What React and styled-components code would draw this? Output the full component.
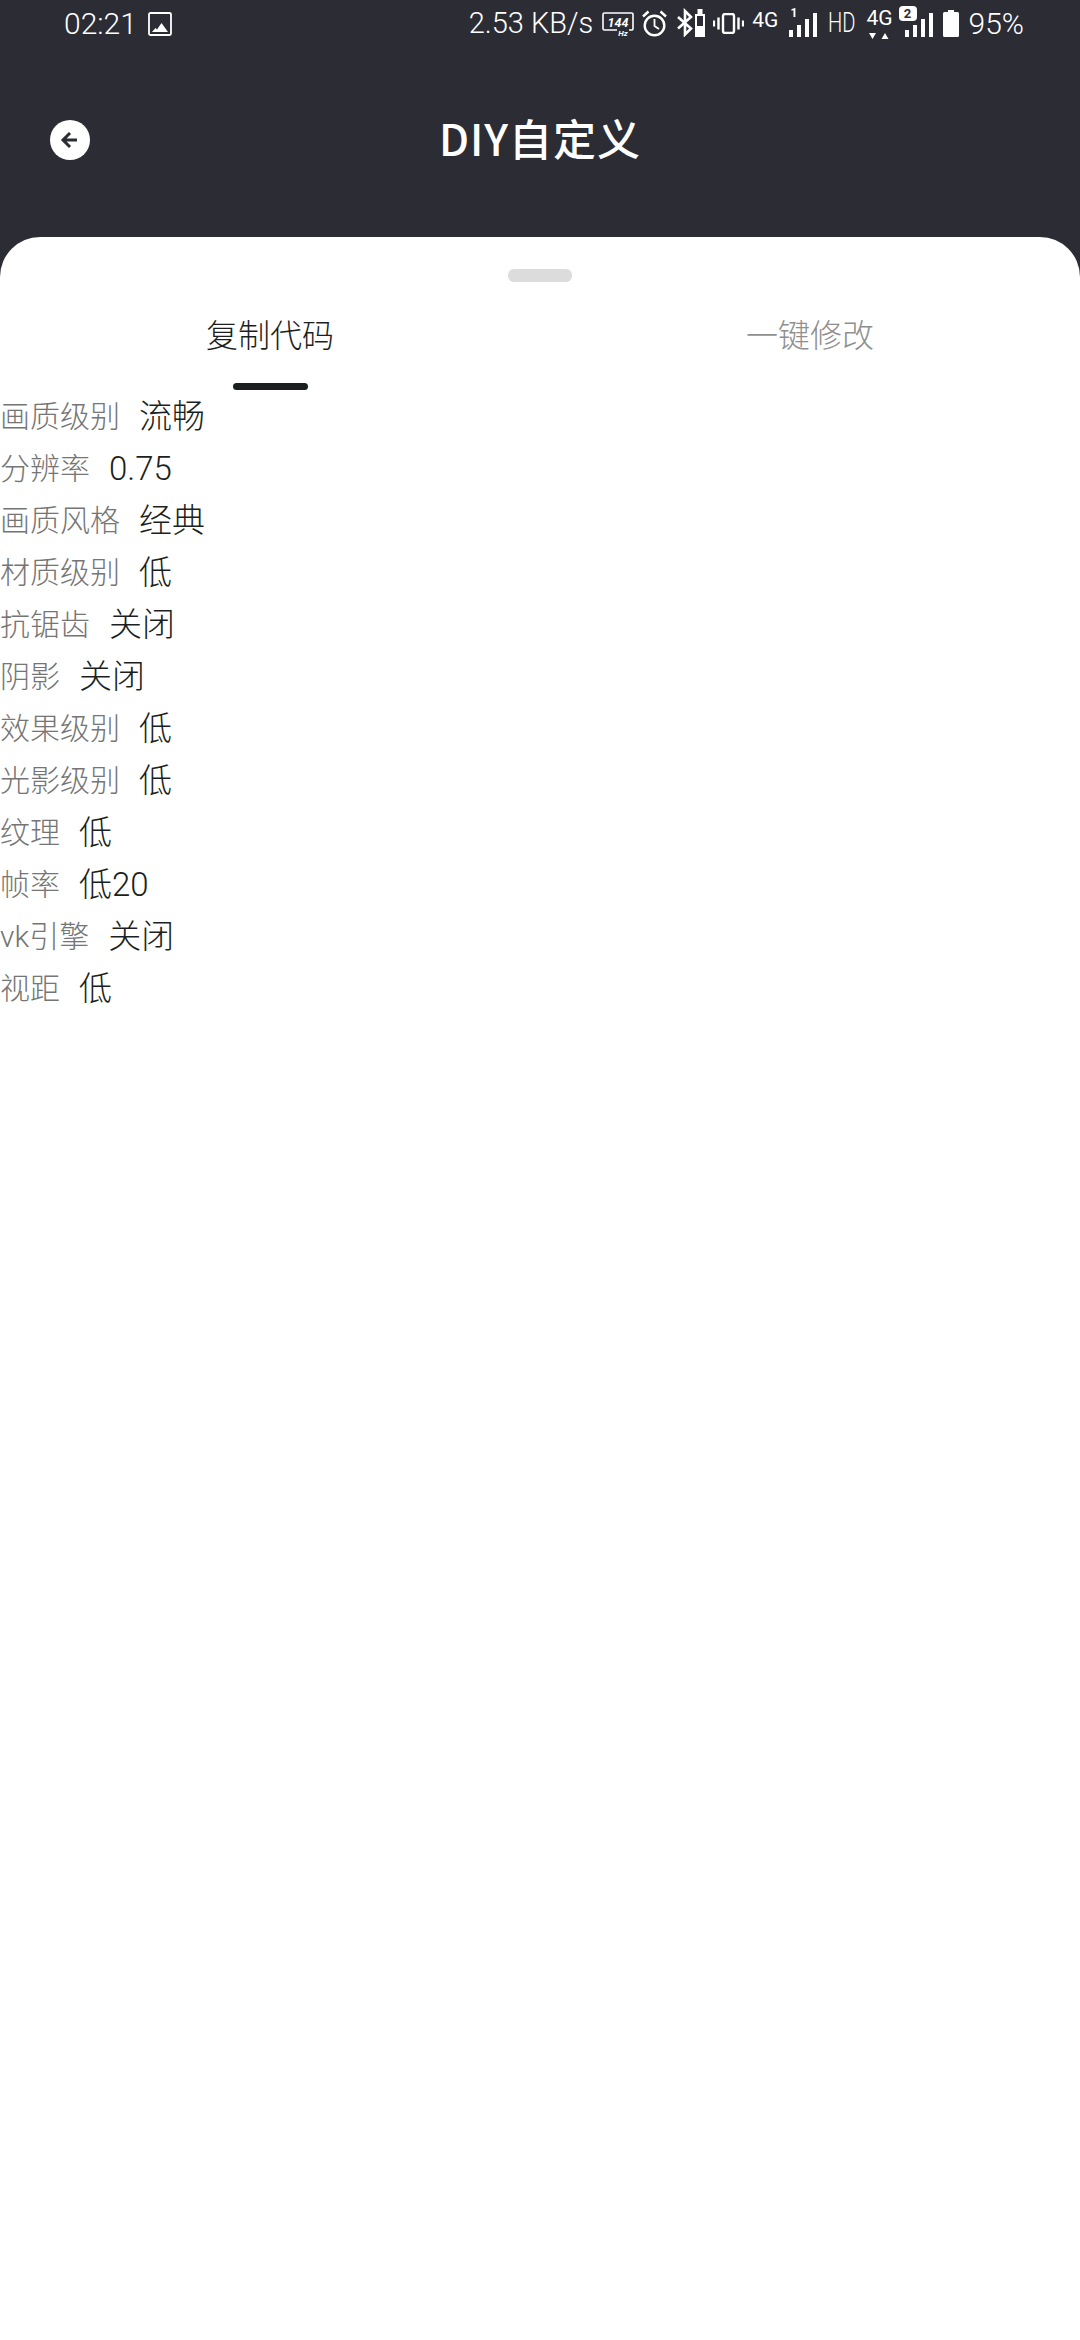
import React from 'react';
import styled, { createGlobalStyle } from 'styled-components';

const GlobalStyle = createGlobalStyle`
  html, body {
    margin: 0;
    padding: 0;
    background: #ffffff;
  }
  * {
    box-sizing: border-box;
  }
`;

const Page = styled.div`
  width: 1080px;
  height: 2340px;
  overflow: hidden;
  display: flex;
  flex-direction: column;
  background: #2c2c35;
  font-family: Roboto, 'Noto Sans CJK SC', sans-serif;
  font-weight: 300;
`;

const StatusBar = styled.div`
  height: 46px;
  padding: 0 56px 0 64px;
  display: flex;
  align-items: center;
  justify-content: space-between;
  color: #ffffff;
  font-size: 30px;
`;

const StatusGroup = styled.div`
  display: flex;
  align-items: center;
`;

const Speed = styled.span`
  font-size: 29px;
`;

const Header = styled.div`
  height: 191px;
  padding: 0 50px 3px;
  display: grid;
  grid-template-columns: 40px 1fr 40px;
  align-items: center;
`;

const BackButton = styled.div`
  width: 40px;
  height: 40px;
  border-radius: 50%;
  background: #ffffff;
  display: flex;
  align-items: center;
  justify-content: center;
`;

const Title = styled.div`
  margin-bottom: 6px;
  text-align: center;
  color: #ffffff;
  font-family: 'Noto Sans CJK SC', sans-serif;
  font-size: 43px;
  font-weight: 500;
  letter-spacing: 1px;
  line-height: 50px;
`;

const Sheet = styled.div`
  flex: 1;
  background: #ffffff;
  border-radius: 40px 40px 0 0;
  display: flex;
  flex-direction: column;
`;

const Handle = styled.div`
  width: 64px;
  height: 13px;
  margin: 32px auto 0;
  border-radius: 6px;
  background: #dcdcdc;
`;

const Tabs = styled.div`
  display: flex;
  height: 101px;
  margin-top: 8px;
`;

const Tab = styled.div`
  flex: 1;
  padding-top: 23px;
  text-align: center;
  font-size: 32px;
  line-height: 46px;
  color: ${(p) => (p.$active ? '#1c1f20' : '#8f8f8f')};
`;

const TabMark = styled.div`
  width: 75px;
  height: 7px;
  margin: 24px auto 0;
  border-radius: 4px;
  background: #1c1f20;
`;

const List = styled.div`
  display: flex;
  flex-direction: column;
`;

const Row = styled.div`
  height: 52px;
  display: flex;
  align-items: center;
  gap: 19px;
`;

const Label = styled.span`
  font-size: 30px;
  line-height: 52px;
  color: #757575;
`;

const Value = styled.span`
  font-size: 33px;
  line-height: 52px;
  color: #1c1f20;
`;

const rows = [
  ['画质级别', '流畅'],
  ['分辨率', '0.75'],
  ['画质风格', '经典'],
  ['材质级别', '低'],
  ['抗锯齿', '关闭'],
  ['阴影', '关闭'],
  ['效果级别', '低'],
  ['光影级别', '低'],
  ['纹理', '低'],
  ['帧率', '低20'],
  ['vk引擎', '关闭'],
  ['视距', '低'],
];

const Icon = styled.svg`
  display: block;
  flex: none;
  margin-left: ${(p) => p.$ml || 0}px;
  margin-top: ${(p) => p.$mt || 0}px;
`;

const ImageIcon = () => (
  <Icon $ml={11} $mt={1} width="24" height="24" viewBox="0 0 24 24">
    <rect x="1" y="1" width="22" height="22" rx="1.5" fill="none" stroke="#fff" strokeWidth="1.8" />
    <path d="M4 20l3.500-4 1.500 1.500 4.500-6.500 6.500 9z" fill="#fff" />
  </Icon>
);

const RefreshRate = () => (
  <Icon $ml={9} $mt={2} width="32" height="24" viewBox="0 0 32 24">
    <path d="M15 18H2.500A1.500 1.500 0 0 1 1 16.500V2.500A1.500 1.500 0 0 1 2.500 1h27A1.500 1.500 0 0 1 31 2.500v14a1.500 1.500 0 0 1-1.500 1.500H27" fill="none" stroke="#fff" strokeWidth="1.6" />
    <text x="16" y="14.500" textAnchor="middle" fill="#fff" fontFamily="Roboto, sans-serif" fontSize="12.500" fontStyle="italic" fontWeight="700">144</text>
    <text x="21" y="23.500" textAnchor="middle" fill="#fff" fontFamily="Roboto, sans-serif" fontSize="8" fontStyle="italic" fontWeight="700">Hz</text>
  </Icon>
);

const AlarmIcon = () => (
  <Icon $ml={8} width="25" height="27" viewBox="0 0 25 27">
    <circle cx="12.500" cy="15.500" r="9.800" fill="none" stroke="#fff" strokeWidth="2.400" />
    <path d="M12.500 9v7l4.500 3" fill="none" stroke="#fff" strokeWidth="1.800" />
    <path d="M1 6.500L6.500 1.500M24 6.500L18.500 1.500" fill="none" stroke="#fff" strokeWidth="2.400" />
  </Icon>
);

const BluetoothIcon = () => (
  <Icon $ml={10} $mt={-1} width="28" height="29" viewBox="0 0 28 29">
    <path d="M1 9l13 11.500-6 6V3l6 6L1 20.500" fill="none" stroke="#fff" strokeWidth="2.600" />
    <path d="M18 6h2.500V1h5v5H28v23H18z" fill="#fff" />
    <rect x="20" y="8" width="6" height="10" fill="#2c2c35" />
  </Icon>
);

const VibrateIcon = () => (
  <Icon $ml={8} width="31" height="21" viewBox="0 0 31 21">
    <rect x="10" y="1" width="11" height="19" rx="2" fill="none" stroke="#fff" strokeWidth="2.400" />
    <path d="M5.500 4.500v12M25.500 4.500v12" stroke="#fff" strokeWidth="2.400" />
    <path d="M1 7.500v6M30 7.500v6" stroke="#fff" strokeWidth="2.200" />
  </Icon>
);

const NetText = styled.span`
  display: block;
  font-size: 21px;
  font-weight: 400;
  line-height: 16px;
`;

const NetTag = styled.span`
  display: block;
  margin-left: 8px;
  margin-top: -7px;
`;

const SignalWrap = styled.div`
  position: relative;
  margin-left: ${(p) => p.$ml}px;
  margin-top: 4px;
  padding-left: ${(p) => p.$pad || 0}px;
`;

const SignalBars = () => (
  <Icon width="28" height="24" viewBox="0 0 28 24">
    <rect x="0" y="17" width="4" height="7" fill="#fff" />
    <rect x="8" y="12" width="4" height="12" fill="#fff" />
    <rect x="16" y="6" width="4" height="18" fill="#fff" />
    <rect x="24" y="0" width="4" height="24" fill="#fff" />
  </Icon>
);

const SimOne = styled.span`
  position: absolute;
  left: 1px;
  top: -6px;
  color: #ffffff;
  font-size: 12px;
  font-weight: 700;
  line-height: 12px;
`;

const SimBadge = styled.span`
  position: absolute;
  left: 0;
  top: -7px;
  width: 18px;
  height: 15px;
  border-radius: 4px;
  background: #ffffff;
  color: #2c2c35;
  font-size: 13px;
  font-weight: 700;
  line-height: 15px;
  text-align: center;
`;

const HdTag = styled.span`
  display: block;
  width: 27px;
  margin-left: 11px;
  font-size: 28px;
  line-height: 28px;
  transform: scaleX(0.72);
  transform-origin: left center;
  white-space: nowrap;
`;

const NetStack = styled.div`
  display: flex;
  flex-direction: column;
  align-items: center;
  gap: 7px;
  margin-left: 11px;
  margin-top: 3px;
`;

const NetArrows = () => (
  <Icon width="20" height="6" viewBox="0 0 20 6">
    <path d="M3.500 6L0 0h7zM16 0l3.500 6h-7z" fill="#fff" />
  </Icon>
);

const BatteryIcon = () => (
  <Icon $ml={10} width="16" height="27" viewBox="0 0 16 27">
    <path d="M5 0h6v2h3.500A1.500 1.500 0 0 1 16 3.500v22a1.500 1.500 0 0 1-1.500 1.500h-13A1.500 1.500 0 0 1 0 25.500v-22A1.500 1.500 0 0 1 1.500 2H5z" fill="#fff" />
  </Icon>
);

const Percent = styled.span`
  margin-left: 10px;
`;

export default function App() {
  return (
    <>
      <GlobalStyle />
      <Page>
        <StatusBar>
          <StatusGroup>
            02:21
            <ImageIcon />
          </StatusGroup>
          <StatusGroup>
            <Speed>2.53 KB/s</Speed>
            <RefreshRate />
            <AlarmIcon />
            <BluetoothIcon />
            <VibrateIcon />
            <NetTag>
              <NetText>4G</NetText>
            </NetTag>
            <SignalWrap $ml={11}>
              <SimOne>1</SimOne>
              <SignalBars />
            </SignalWrap>
            <HdTag>HD</HdTag>
            <NetStack>
              <NetText>4G</NetText>
              <NetArrows />
            </NetStack>
            <SignalWrap $ml={6} $pad={6}>
              <SimBadge>2</SimBadge>
              <SignalBars />
            </SignalWrap>
            <BatteryIcon />
            <Percent>95%</Percent>
          </StatusGroup>
        </StatusBar>
        <Header>
          <BackButton>
            <svg width="22" height="22" viewBox="0 0 22 22" fill="none" stroke="#2c2c35" strokeWidth="3">
              <path d="M18 11H5M11 4l-7 7 7 7" />
            </svg>
          </BackButton>
          <Title>DIY自定义</Title>
        </Header>
        <Sheet>
          <Handle />
          <Tabs>
            <Tab $active>
              复制代码
              <TabMark />
            </Tab>
            <Tab>一键修改</Tab>
          </Tabs>
          <List>
            {rows.map(([label, value]) => (
              <Row key={label}>
                <Label>{label}</Label>
                <Value>{value}</Value>
              </Row>
            ))}
          </List>
        </Sheet>
      </Page>
    </>
  );
}
